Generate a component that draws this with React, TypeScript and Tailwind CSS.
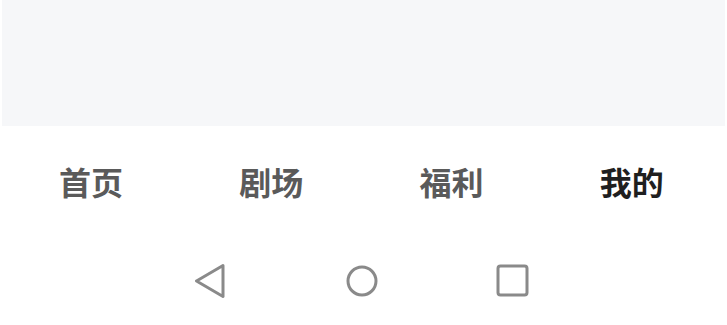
export default function App() {
  const tabs = ["首页", "剧场", "福利", "我的"];
  return (
    <main className="h-[325px] w-[727px] bg-white font-['Noto_Sans_CJK_SC','Noto_Sans',sans-serif]">
      <div className="mx-[2px] h-[126px] bg-[#f6f7f9]" />

      {/* tab bar */}
      <nav className="grid h-[110px] grid-cols-4 items-center pl-[1px] pr-[5px]">
        {tabs.map((t, i) => (
          <div
            key={t}
            className={
              "text-center text-[32px] font-bold leading-none " +
              (i === 3 ? "text-[#1f1f1f]" : "text-[#5a5a5a]")
            }
          >
            {t}
          </div>
        ))}
      </nav>

      {/* system nav */}
      <div className="flex h-[89px] items-center justify-center gap-[116px] pr-[4px]">
        <svg width="34" height="38" viewBox="0 0 34 38" fill="none">
          <path
            d="M28 3.5 L1.5 19 L28 34.5 Z"
            stroke="#8a8a8a"
            strokeWidth="3"
            strokeLinejoin="round"
          />
        </svg>
        <svg width="34" height="38" viewBox="0 0 34 38" fill="none">
          <circle cx="17" cy="19" r="14" stroke="#8a8a8a" strokeWidth="3" />
        </svg>
        <svg width="34" height="38" viewBox="0 0 34 38" fill="none">
          <rect x="3" y="4" width="29" height="29" rx="2.5" stroke="#8a8a8a" strokeWidth="3" />
        </svg>
      </div>
    </main>
  );
}
